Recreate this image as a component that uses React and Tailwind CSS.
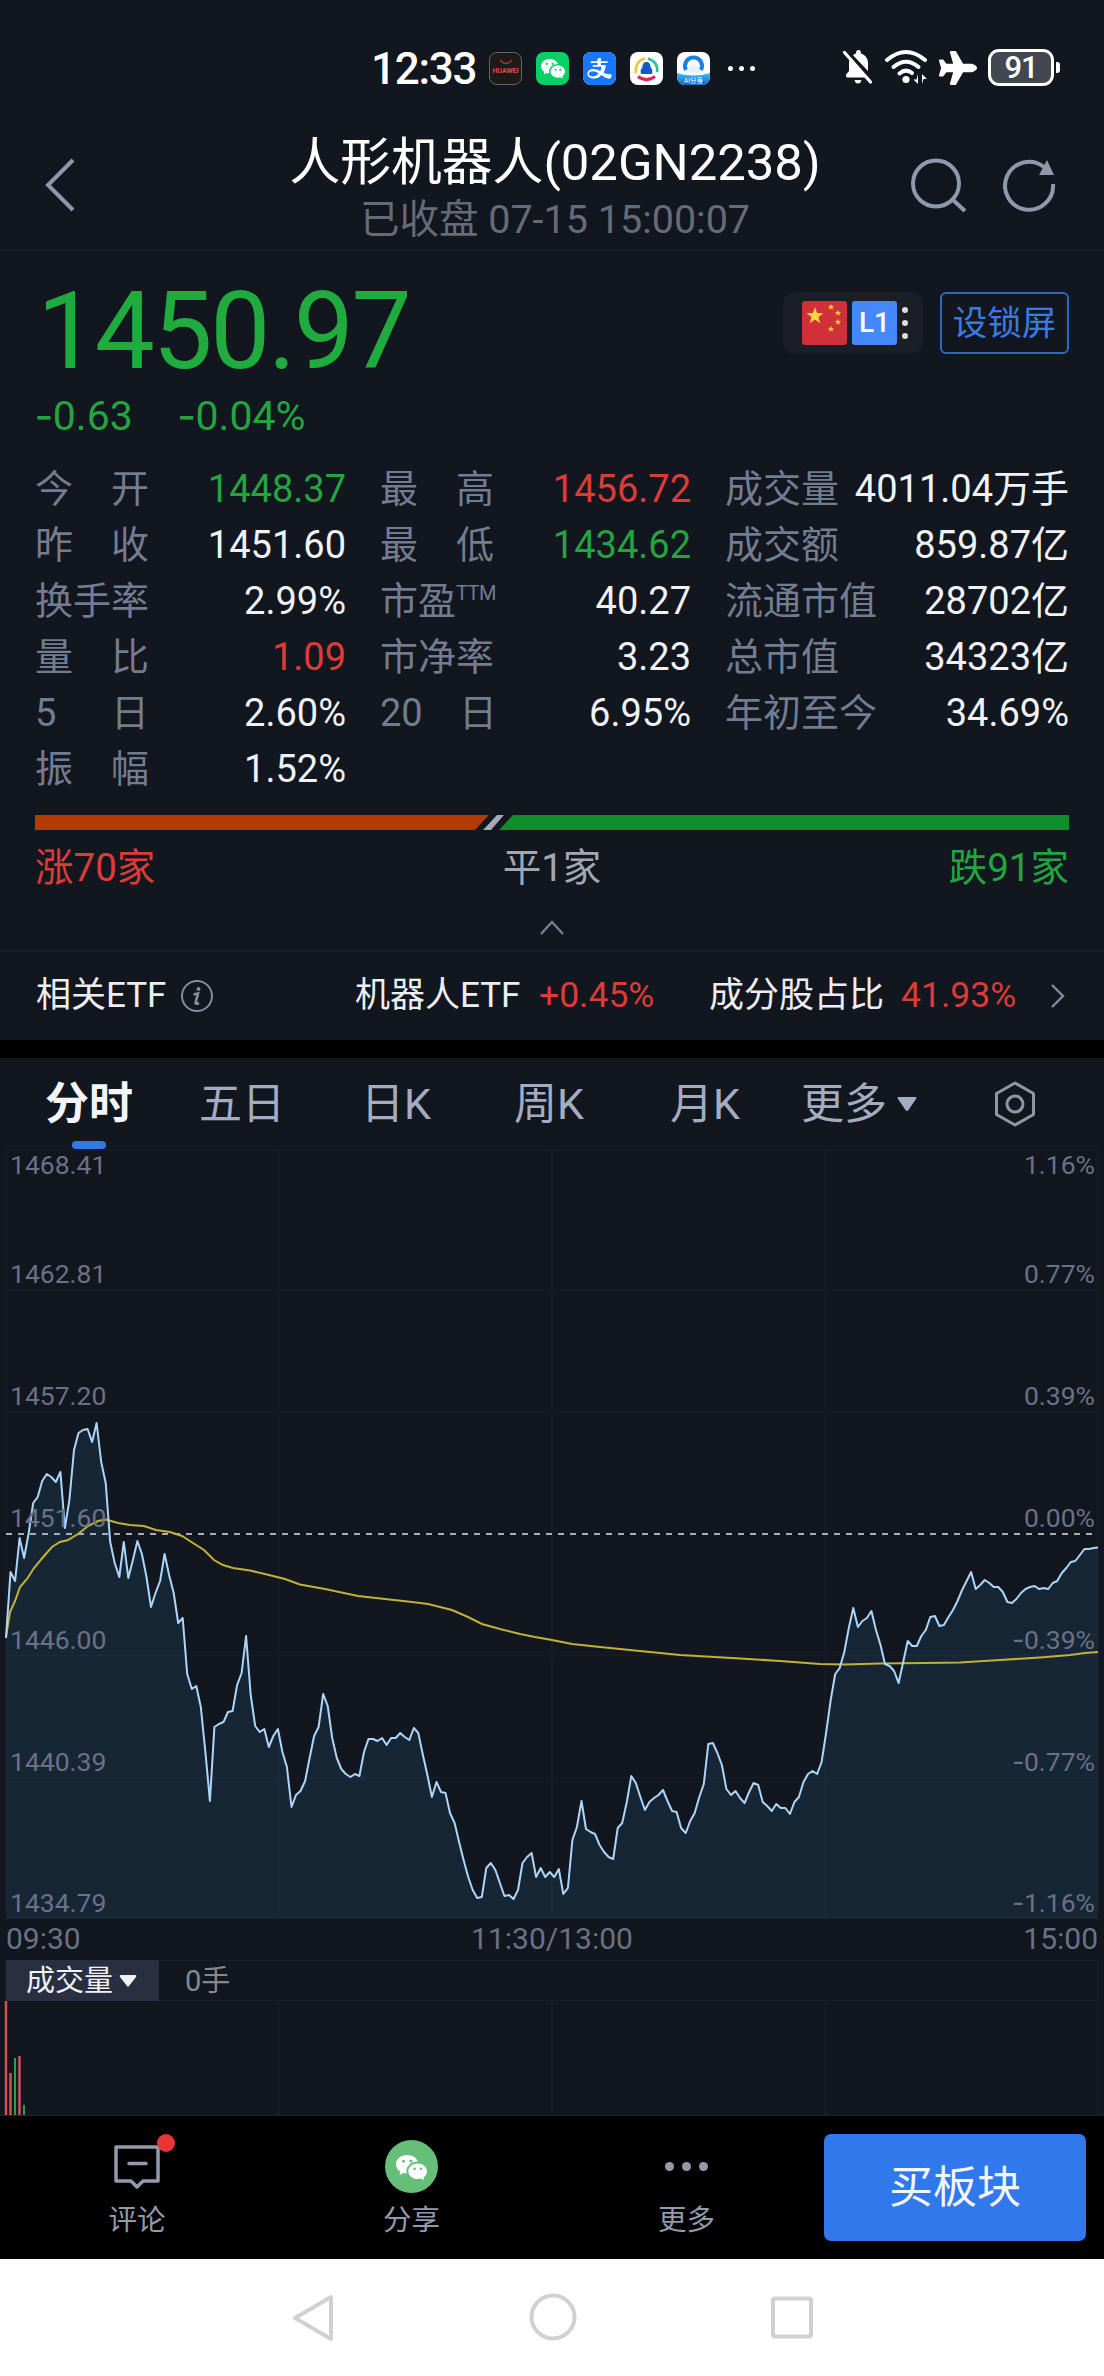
import React from "react";
import { BsWechat } from "react-icons/bs";
import { AiFillAlipaySquare } from "react-icons/ai";
import { FaPlane } from "react-icons/fa";

const GREEN = "text-[#22a440]";
const RED = "text-[#dc3c38]";
const WHITE = "text-[#f0f2f6]";

const STATS = [
  [["今", "开"], "1448.37", GREEN, ["最", "高"], "1456.72", RED, "成交量", "4011.04万手"],
  [["昨", "收"], "1451.60", WHITE, ["最", "低"], "1434.62", GREEN, "成交额", "859.87亿"],
  [["换手率"], "2.99%", WHITE, ["市盈", "TTM"], "40.27", WHITE, "流通市值", "28702亿"],
  [["量", "比"], "1.09", RED, ["市净率"], "3.23", WHITE, "总市值", "34323亿"],
  [["5", "日"], "2.60%", WHITE, ["20", "日"], "6.95%", WHITE, "年初至今", "34.69%"],
  [["振", "幅"], "1.52%", WHITE, null, "", WHITE, "", ""],
];

// Price curve: one vertical position per minute of trading.
const PRICE = [
  1638, 1572, 1581, 1538, 1558, 1533, 1503, 1497, 1481, 1474, 1477, 1482, 1472, 1528, 1500, 1450, 1433, 1430, 1429, 1442,
  1423, 1462, 1483, 1542, 1563, 1577, 1542, 1578, 1560, 1541, 1554, 1577, 1607, 1593, 1581, 1554, 1575, 1593, 1623, 1618,
  1674, 1689, 1686, 1707, 1752, 1801, 1727, 1724, 1722, 1712, 1711, 1685, 1673, 1636, 1695, 1726, 1732, 1729, 1747, 1736,
  1729, 1752, 1767, 1807, 1795, 1791, 1781, 1758, 1736, 1727, 1694, 1706, 1738, 1758, 1769, 1774, 1777, 1774, 1776, 1752,
  1739, 1739, 1741, 1738, 1745, 1738, 1738, 1733, 1737, 1740, 1728, 1733, 1755, 1775, 1797, 1782, 1792, 1793, 1813, 1823,
  1842, 1860, 1877, 1890, 1898, 1897, 1868, 1863, 1870, 1883, 1896, 1895, 1899, 1890, 1863, 1857, 1853, 1877, 1868, 1877,
  1872, 1877, 1869, 1894, 1888, 1840, 1827, 1801, 1829, 1832, 1834, 1845, 1852, 1857, 1859, 1828, 1823, 1802, 1776, 1783,
  1797, 1810, 1802, 1798, 1795, 1790, 1801, 1811, 1812, 1828, 1833, 1821, 1813, 1797, 1784, 1744, 1743, 1753, 1765, 1789,
  1795, 1791, 1798, 1803, 1792, 1783, 1785, 1802, 1806, 1811, 1804, 1808, 1808, 1814, 1802, 1797, 1782, 1774, 1771, 1774,
  1762, 1733, 1700, 1674, 1668, 1652, 1628, 1608, 1627, 1621, 1618, 1611, 1630, 1645, 1664, 1666, 1671, 1683, 1662, 1641,
  1646, 1646, 1636, 1630, 1617, 1616, 1626, 1625, 1617, 1610, 1601, 1590, 1581, 1572, 1589, 1585, 1580, 1583, 1587, 1587,
  1592, 1602, 1603, 1599, 1593, 1589, 1587, 1586, 1589, 1588, 1589, 1583, 1581, 1573, 1568, 1562, 1561, 1555, 1549, 1549,
  1548, 1547.5,
];

const AVERAGE =
  "6,1637 10,1612 15,1601 20,1587 27,1579 34,1568 44,1556 52,1547 60,1542 68,1540 78,1534 88,1526 98,1521 106,1519.5 118,1523 130,1525 144,1526 156,1530 170,1532 182,1536 193,1543 204,1550 214,1560 223,1565 233,1568 250,1570.5 265,1574 285,1579 300,1584.5 325,1589 358,1596 385,1599 412,1602 428,1604 452,1610 468,1617 482,1624 500,1629 520,1634 535,1637 552,1640 572,1644 600,1647 640,1651 680,1655 740,1658.5 780,1661 820,1664 845,1664.5 880,1663.5 925,1663 960,1662.5 1000,1660 1040,1657.5 1070,1655 1085,1653 1098,1652";

const LINE = PRICE.map((y, i) => `${(6 + (i * 1092) / 241).toFixed(1)},${y}`).join(" ");

const SCALE = [
  ["1468.41", "1.16%", "top-[0px]"],
  ["1462.81", "0.77%", "top-[109px]"],
  ["1457.20", "0.39%", "top-[231px]"],
  ["1451.60", "0.00%", "top-[353px]"],
  ["1446.00", "-0.39%", "top-[475px]"],
  ["1440.39", "-0.77%", "top-[597px]"],
  ["1434.79", "-1.16%", "top-[738px]"],
];

// Negative values take a wider, higher minus than the digits' own font has.
function Signed({ value }) {
  if (value[0] !== "-") return <span>{value}</span>;
  return <span className="flex"><span className="-mt-[0.11em] font-['Noto_Sans_CJK_SC'] text-[1.25em]">-</span><span>{value.slice(1)}</span></span>;
}

function StatusBar() {
  return (
    <div className="flex h-[110px] items-start pl-[371px] pt-[46px] text-white">
      <div className="h-[44px] w-[118px] text-[44px] font-medium leading-[46px] tracking-[-1.3px]">12:33</div>
      <div className="flex h-[44px] items-center gap-[14px]">
        <div className="flex size-[33px] flex-col items-center justify-center rounded-[8px] border border-[#666] bg-[#1d1a1a]">
          <svg width="14" height="6" viewBox="0 0 14 6" fill="none" stroke="#a33" strokeWidth="1.3"><path d="M1 1Q7 8 13 1" /></svg>
          <span className="text-[7px] font-bold leading-[12px] text-[#e04a48]">HUAWEI</span>
        </div>
        <div className="flex size-[33px] items-center justify-center rounded-[8px] bg-[#07d065]"><BsWechat size={24} /></div>
        <div className="flex size-[33px] items-center justify-center overflow-hidden rounded-[8px] bg-white text-[#1677ff]">
          <AiFillAlipaySquare size={43} className="shrink-0" />
        </div>
        <svg width="33" height="33" viewBox="0 0 33 33" fill="none">
          <rect width="33" height="33" rx="8" fill="#fff" />
          <path d="M15 6.500C8 8 5 14 6 21" stroke="#f6c338" strokeWidth="2.600" />
          <path d="M18 6.500C25 9 28 14 27 20" stroke="#28bfa4" strokeWidth="2.600" />
          <path d="M8 24.500Q16.500 31 25 24.500" stroke="#e0245e" strokeWidth="3.400" />
          <path d="M16.500 10c3.200 0 4 2.600 4 5 2.300 3 2.300 5 1.300 7H11.200c-1-2-1-4 1.300-7 0-2.400.8-5 4-5z" fill="#1259c9" />
        </svg>
        <svg width="33" height="33" viewBox="0 0 33 33" fill="none">
          <defs><linearGradient id="sky" x1="0" y1="0" x2="0" y2="1"><stop stopColor="#40c0f8" /><stop offset="1" stopColor="#1260cc" /></linearGradient></defs>
          <rect width="33" height="33" rx="8" fill="#fff" />
          <path d="M0 21Q16.500 26 33 21V25a8 8 0 0 1-8 8H8a8 8 0 0 1-8-8z" fill="url(#sky)" />
          <path d="M9 18a8.500 8.500 0 1 1 15 0" stroke="#1a80e8" strokeWidth="4" />
          <path d="M12 20a5 5 0 0 1 9-5l3 6z" fill="#e3f3ff" />
          <text x="16.500" y="31" fontSize="6.500" fill="#fff" textAnchor="middle">AI分身</text>
        </svg>
      </div>
      <div className="ml-[18px] flex h-[44px] items-center gap-[6px]">
        <i className="size-[5px] rounded-full bg-white" /><i className="size-[5px] rounded-full bg-white" /><i className="size-[5px] rounded-full bg-white" />
      </div>
      <svg className="ml-[87px] mt-[3px]" width="32" height="36" viewBox="0 0 32 36" fill="#fff">
        <path d="M4 27V25.500L7 22V14c0-1.500.3-2.800.9-4L23 28.500H4.500z M11 6.200C12 5.300 13 4.800 14 4.500 14 2 15 1 16.500 1S19 2 19 4.500c4.500 1.500 7 5 7 9.500v8z" />
        <path d="M2.500 3.500 28.500 33" stroke="#fff" strokeWidth="3.200" strokeLinecap="round" />
        <path d="M12.500 31h7q-.8 3.500-3.500 3.500T12.500 31z" />
      </svg>
      <svg className="ml-[10px] mt-[3px]" width="46" height="36" viewBox="0 0 46 36" fill="none" stroke="#fff" strokeWidth="4" strokeLinecap="round">
        <path d="M3 11Q22 -5 41 11" /><path d="M9.500 18Q22 7.500 34.500 18" /><path d="M15.500 24.500Q22 19 28 24" />
        <circle cx="22" cy="30.500" r="3.600" fill="#fff" stroke="none" />
        <path d="M34 25v10l-4.500-4.500h3z M38 35V25l5 5h-3.500z" fill="#fff" stroke="none" />
      </svg>
      <FaPlane size={38} className="ml-[9px] mt-[3px]" />
      <div className="ml-[11px] mt-[3px] flex h-[37px] w-[66px] items-center justify-center rounded-[11px] border-[3px] border-white bg-[#43474f] text-[31px] font-medium leading-[31px] tracking-[-1px]">91</div>
      <i className="ml-[2px] mt-[16px] h-[11px] w-[4px] rounded-r-[3px] bg-white" />
    </div>
  );
}

function Header() {
  return (
    <div className="flex h-[141px] items-start border-b-2 border-[#1a1d25] pl-[44px]">
      <svg className="mt-[48px]" width="32" height="54" viewBox="0 0 32 54" fill="none" stroke="#8f98ad" strokeWidth="4"><path d="M29 2 4 27 29 52" /></svg>
      <div className="ml-[179px] flex w-[600px] flex-col items-center">
        <div className="mt-[23px] whitespace-nowrap text-[50.800px] leading-[60px] text-white">人形机器人(02GN2238)</div>
        <div className="mt-[4px] whitespace-nowrap text-[39.500px] leading-[46px] text-[#666b79]">已收盘 07-15 15:00:07</div>
      </div>
      <svg className="ml-[56px] mt-[47px]" width="58" height="56" viewBox="0 0 58 56" fill="none" stroke="#8f98ad" strokeWidth="4"><circle cx="25" cy="26.500" r="23" /><path d="m42 43 12 11" /></svg>
      <svg className="ml-[34px] mt-[47px]" width="54" height="56" viewBox="0 0 54 56" fill="none" stroke="#8f98ad" strokeWidth="4"><path d="M41 10A24 24 0 1 0 50 27" /><path d="M44 3 51 18H36z" fill="#8f98ad" stroke="none" /></svg>
    </div>
  );
}

function Star({ x, y, r }) {
  const pts = Array.from({ length: 10 }, (_, i) => {
    const a = (i * Math.PI) / 5 - Math.PI / 2;
    const d = i % 2 ? r * 0.4 : r;
    return `${x + d * Math.cos(a)},${y + d * Math.sin(a)}`;
  }).join(" ");
  return <polygon points={pts} fill="#ffd53d" />;
}

function Quote() {
  return (
    <div className="flex h-[201px] justify-between px-[35px]">
      <div>
        <div className="mt-[29px] h-[104px] pl-[2px] text-[107px] leading-[104px] tracking-[-2.400px] text-[#20ab3f]">1450.97</div>
        <div className={"mt-[8px] flex gap-[45px] text-[41px] leading-[48px] " + GREEN}><Signed value="-0.63" /><Signed value="-0.04%" /></div>
      </div>
      <div className="mt-[41px] flex h-[62px] gap-[17px]">
        <div className="flex w-[140px] items-center rounded-[12px] bg-[#1b1e25] pl-[19px]">
          <svg width="45" height="44" viewBox="0 0 45 44"><rect width="45" height="44" rx="3" fill="#d03038" /><Star x={13} y={15} r={9} /><Star x={29} y={6} r={3.3} /><Star x={36} y={12} r={3.3} /><Star x={36} y={21} r={3.3} /><Star x={29} y={28} r={3.3} /></svg>
          <div className="ml-[5px] flex h-[44px] w-[45px] items-center justify-center rounded-[3px] bg-[#4488fb] text-[28px] font-medium text-white">L1</div>
          <div className="ml-[5px] flex flex-col gap-[7px]"><i className="size-[6px] rounded-full bg-[#ddd]" /><i className="size-[6px] rounded-full bg-[#ddd]" /><i className="size-[6px] rounded-full bg-[#ddd]" /></div>
        </div>
        <div className="flex w-[129px] items-center justify-center rounded-[6px] border-2 border-[#2f67c4] text-[34.500px] leading-[40px] text-[#3a7be2]">设锁屏</div>
      </div>
    </div>
  );
}

function Label({ parts }) {
  if (!parts) return <span />;
  if (parts[1] === "TTM")
    return <span className="flex">市盈<span className="-mt-[8px] text-[20px] tracking-[-0.5px]">TTM</span></span>;
  const width = parts[0] === "20" ? "w-[117px]" : "w-[114px]";
  return <span className={"flex justify-between " + width}>{parts.map((p) => <span key={p}>{p}</span>)}</span>;
}

function Stats() {
  return (
    <div className="flex flex-col px-[35px] pt-[9px] text-[38px] text-[#737c91]">
      {STATS.map((r, i) => (
        <div key={i} className="grid h-[56px] grid-cols-[311px_311px_344px] gap-[34px] leading-[56px]">
          <div className="flex justify-between"><Label parts={r[0]} /><span className={r[2]}>{r[1]}</span></div>
          <div className="flex justify-between"><Label parts={r[3]} /><span className={r[5]}>{r[4]}</span></div>
          <div className="flex justify-between whitespace-nowrap"><span>{r[6]}</span><span className={WHITE}>{r[7]}</span></div>
        </div>
      ))}
    </div>
  );
}

function Breadth() {
  return (
    <div className="h-[153px] px-[35px] pt-[18px]">
      <svg width="1034" height="15" viewBox="0 0 1034 15" className="block">
        <path d="M0 0H454L440 15H0z" fill="#b33a00" /><path d="M462 0H469L456 15H448z" fill="#a3a9b8" /><path d="M478 0H1034V15H464z" fill="#0f8e2e" />
      </svg>
      <div className="mt-[13px] grid grid-cols-3 text-[38.500px] leading-[50px]">
        <span className={RED}>涨70家</span><span className="text-center text-[#a3a7b2]">平1家</span><span className={"text-right " + GREEN}>跌91家</span>
      </div>
      <svg className="mx-auto mt-[27px] block" width="26" height="16" viewBox="0 0 26 16" fill="none" stroke="#757c8c" strokeWidth="2.500"><path d="M2 14 13 2 24 14" /></svg>
    </div>
  );
}

function Etf() {
  return (
    <div className="flex h-[90px] items-center whitespace-nowrap border-t-2 border-[#1b202a] pl-[36px] text-[35px] text-[#eceef2]">
      <span className="w-[144px]">相关ETF</span>
      <svg width="34" height="34" viewBox="0 0 34 34" fill="none" stroke="#858c9c" strokeWidth="2">
        <circle cx="17" cy="17" r="15" /><circle cx="18.500" cy="10" r="2" fill="#858c9c" stroke="none" /><path d="M13.500 15.500 18 14.500 15.500 24q0 1.500 3.500 0" strokeWidth="2.600" />
      </svg>
      <span className="ml-[141px] w-[184px]">机器人ETF</span>
      <span className={"w-[170px] text-[35.500px] " + RED}>+0.45%</span>
      <span className="w-[192px]">成分股占比</span>
      <span className={"w-[149px] text-[35.500px] " + RED}>41.93%</span>
      <svg width="16" height="26" viewBox="0 0 16 26" fill="none" stroke="#858c9c" strokeWidth="2.400"><path d="m2 2 11 11L2 24" /></svg>
    </div>
  );
}

function Tabs() {
  return (
    <div className="h-[92px] border-t-[18px] border-black box-content">
      <div className="flex h-[83px] items-center whitespace-nowrap pl-[45px] pt-[9px] text-[43px] leading-[60px] text-[#a5acc2]">
        <span className="w-[154px] text-[44px] font-bold text-[#f4f5f8]">分时</span>
        <span className="w-[162px]">五日</span>
        <span className="w-[153px]">日K</span>
        <span className="w-[156px]">周K</span>
        <span className="w-[131px]">月K</span>
        <span>更多</span>
        <svg className="ml-[9px]" width="22" height="16" viewBox="0 0 22 16"><path d="M3 1H19Q21.500 1 20 3L12.500 14Q11 16 9.500 14L2 3Q.5 1 3 1z" fill="#a5acc2" /></svg>
        <svg className="ml-[75px]" width="44" height="46" viewBox="0 0 44 46" fill="none" stroke="#8f96a8" strokeWidth="3"><path d="M22 2 40.500 12.500V33.500L22 44 3.500 33.500V12.500z" strokeLinejoin="round" /><circle cx="22" cy="23" r="8" /></svg>
      </div>
      <div className="ml-[72px] h-[8px] w-[34px] rounded-full bg-[#3578e5]" />
    </div>
  );
}

function Chart() {
  return (
    <div className="relative h-[769px]">
      <svg width="1104" height="769" viewBox="0 1150 1104 769" className="block" fill="none">
        <polygon points={`6,1918.500 ${LINE} 1098,1918.500`} fill="#172635" />
        <g stroke="#8899bb" strokeOpacity="0.055" strokeWidth="1.500">
          <path d="M6 1150.500H1098M6 1290.500H1098M6 1412H1098M6 1655.500H1098M6 1777.500H1098M6 1918H1098M6 1150V1918M279 1150V1918M552 1150V1918M825 1150V1918M1098 1150V1918" />
        </g>
        <path d="M6 1534H1094" stroke="#a8adbc" strokeWidth="2" strokeDasharray="6 6" />
        <polyline points={AVERAGE} stroke="#c3b03a" strokeWidth="2" />
        <polyline points={LINE} stroke="#acd6f9" strokeWidth="2" strokeLinejoin="round" />
      </svg>
      {SCALE.map(([l, r, top]) => (
        <div key={l} className={"absolute left-0 flex h-[30px] w-full justify-between pl-[10px] pr-[9px] text-[26.500px] leading-[30px] text-[#6b7187] " + top}>
          <span>{l}</span><Signed value={r} />
        </div>
      ))}
    </div>
  );
}

function Volume() {
  return (
    <>
      <div className="grid h-[41px] grid-cols-3 px-[6px] text-[30px] leading-[39px] text-[#6b7187]">
        <span>09:30</span><span className="text-center">11:30/13:00</span><span className="text-right">15:00</span>
      </div>
      <div className="mx-[6px] flex h-[41px] items-center border-y border-r border-[#1a1e27] leading-[40px]">
        <div className="-my-px flex h-[41px] w-[153px] items-center bg-[#292f40] pl-[20px] text-[29px] text-[#f0f2f6]">
          成交量
          <svg className="ml-[6px]" width="18" height="14" viewBox="0 0 18 14"><path d="M2 1H16Q18 1 17 3L10 12Q9 13.500 8 12L1 3Q0 1 2 1z" fill="#f0f2f6" /></svg>
        </div>
        <span className="ml-[26px] text-[29px] text-[#858991]">0手</span>
      </div>
      <svg width="1104" height="115" viewBox="0 2001 1104 115" className="block">
        <path d="M6 2001V2116M279 2001V2116M552 2001V2116M825 2001V2116M1098 2001V2116" stroke="#8899bb" strokeOpacity="0.055" strokeWidth="1.500" />
        <path d="M6 2001V2115M10.500 2073V2115M19.500 2056V2115" stroke="#cf5654" strokeWidth="2.400" />
        <path d="M15 2058V2115M24 2105V2115" stroke="#2f9c4a" strokeWidth="2" />
        <path d="M0 2115.500H1104" stroke="#1f242d" />
      </svg>
    </>
  );
}

function ActionBar() {
  return (
    <div className="flex h-[143px] bg-black text-[28.500px] leading-[34px] text-[#939aab]">
      <div className="flex w-[274px] flex-col items-center">
        <div className="relative mt-[28px] h-[46px] w-[46px]">
          <svg width="46" height="46" viewBox="0 0 46 46" fill="none" stroke="#939aab" strokeWidth="3.500" strokeLinejoin="round" strokeLinecap="round"><path d="M2 3H44V37H29L23 43 17 37H2z" /><path d="M15 19.500H32" /></svg>
          <i className="absolute -top-[10px] left-[43px] size-[18px] rounded-full bg-[#e83535]" />
        </div>
        <span className="mt-[14px]">评论</span>
      </div>
      <div className="flex w-[275px] flex-col items-center">
        <div className="mt-[24px] flex size-[53px] items-center justify-center rounded-full bg-[#65bf78] text-white"><BsWechat size={31} /></div>
        <span className="mt-[11px]">分享</span>
      </div>
      <div className="flex w-[275px] flex-col items-center">
        <div className="mt-[24px] flex h-[53px] items-center gap-[8px]"><i className="size-[9px] rounded-full bg-[#939aab]" /><i className="size-[9px] rounded-full bg-[#939aab]" /><i className="size-[9px] rounded-full bg-[#939aab]" /></div>
        <span className="mt-[11px]">更多</span>
      </div>
      <div className="mt-[18px] flex h-[107px] w-[262px] items-center justify-center rounded-[7px] bg-[#3178ec] text-[44px] text-[#f2f6ff]">买板块</div>
    </div>
  );
}

function NavBar() {
  return (
    <div className="flex h-[117px] justify-center bg-white pt-[34px]">
      <svg className="mr-[194px]" width="44" height="50" viewBox="0 0 44 50" fill="none" stroke="#d1d1d1" strokeWidth="4" strokeLinejoin="round"><path d="M40 4V46L4 25z" /></svg>
      <svg className="mr-[193px]" width="48" height="48" viewBox="0 0 48 48" fill="none" stroke="#d1d1d1" strokeWidth="4"><circle cx="24" cy="24" r="21.500" /></svg>
      <svg width="44" height="48" viewBox="0 0 44 48" fill="none" stroke="#d1d1d1" strokeWidth="4"><rect x="3" y="5.500" width="38" height="38" rx="2" /></svg>
    </div>
  );
}

export default function App() {
  return (
    <div className="h-[2376px] w-[1104px] overflow-hidden bg-[#12161e] font-[Roboto,'Noto_Sans_CJK_SC',sans-serif]">
      <StatusBar />
      <Header />
      <Quote />
      <Stats />
      <Breadth />
      <Etf />
      <Tabs />
      <Chart />
      <Volume />
      <ActionBar />
      <NavBar />
    </div>
  );
}
